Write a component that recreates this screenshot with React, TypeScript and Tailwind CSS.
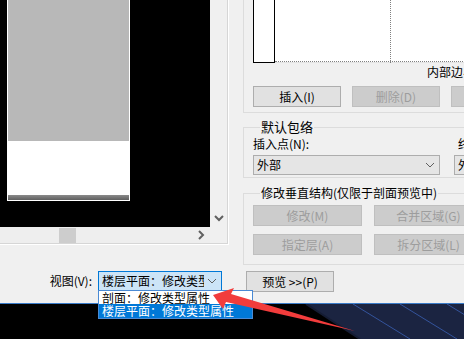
import React from "react";

const Btn = ({ label, w, disabled }: { label: string; w: string; disabled?: boolean }) => (
  <div
    className={`${w} h-[21px] shrink-0 flex items-center justify-center border ${
      disabled ? "bg-[#cccccc] border-[#bfbfbf] text-[#9d9d9d]" : "bg-[#e1e1e1] border-[#adadad] text-black"
    }`}
  >
    {label}
  </div>
);

const Chevron = () => (
  <svg width="10" height="6" viewBox="0 0 10 6">
    <polyline points="1,1 5,5 9,1" fill="none" stroke="#606060" strokeWidth="1" />
  </svg>
);

export default function App() {
  return (
    <div className="relative w-[464px] h-[339px] overflow-hidden bg-black font-['Noto_Sans_CJK_SC',sans-serif] text-[12px] leading-[14px] text-black">
      {/* dialog */}
      <div className="flex h-[304px] bg-[#f0f0f0] border-b border-[#3a7bc8]">
        {/* left column */}
        <div className="w-[243px] shrink-0 flex flex-col">
          <div className="w-[229px] h-[245px] border-r border-b border-white">
            <div className="w-[228px] h-[244px] border-r border-b border-[#d6d6d6] flex flex-col">
              <div className="flex h-[227px]">
                <div className="w-[210px] h-[227px] bg-black pl-[7px]">
                  <div className="w-[123px] h-[201px] border-l border-r border-b border-white flex flex-col">
                    <div className="h-[141px] bg-[#b8b8b8]" />
                    <div className="flex-1 bg-white" />
                    <div className="h-[5px] bg-[linear-gradient(#8a8a8a,#5f5f5f)]" />
                  </div>
                </div>
                <div className="w-[17px] bg-[#f0f0f0] flex flex-col justify-end items-center pb-[5px]">
                  <svg width="10" height="7" viewBox="0 0 10 7">
                    <polyline points="1,1 5,5 9,1" fill="none" stroke="#606060" strokeWidth="2" />
                  </svg>
                </div>
              </div>
              <div className="flex h-[16px]">
                <div className="w-[210px] bg-[#eeeeee] flex items-center relative">
                  <div className="ml-[59px] w-[17px] h-[15px] bg-[#cdcdcd]" />
                  <div className="ml-auto mr-[5px]">
                    <svg width="7" height="10" viewBox="0 0 7 10">
                      <polyline points="1,1 5,5 1,9" fill="none" stroke="#606060" strokeWidth="2" />
                    </svg>
                  </div>
                </div>
                <div className="flex-1 bg-[#f0f0f0]" />
              </div>
            </div>
          </div>
          <div className="flex items-center pt-[26px]">
            <div className="w-[92px] text-right whitespace-nowrap">视图(V):</div>
            <div className="ml-[6px] w-[124px] h-[20px] border border-[#0078d7] bg-[#cce4f7] flex items-center pl-[3px] pr-[4px]">
              <div className="flex-1 overflow-hidden whitespace-nowrap">楼层平面：修改类型属性</div>
              <div className="ml-[3px]">
                <Chevron />
              </div>
            </div>
          </div>
        </div>

        {/* right column */}
        <div className="w-[300px] shrink-0 flex flex-col">
          <div className="h-[113px] border-l border-b border-[#dcdcdc] pl-[9px] flex flex-col">
            <div className="relative h-[63px] bg-white border-b border-[#e4e4e4] flex">
              <div className="w-[22px] h-[63px] border-l border-r border-b border-black" />
              <div className="w-[116px] h-[63px] border-r border-dotted border-[#808080]" />
              <div className="absolute left-[22px] right-0 bottom-0 border-b border-dotted border-[#808080]" />
            </div>
            <div className="pl-[174px] pt-[2px] whitespace-nowrap">内部边界</div>
            <div className="flex gap-[11px] mt-[7px]">
              <Btn label="插入(I)" w="w-[88px]" />
              <Btn label="删除(D)" w="w-[88px]" disabled />
              <Btn label="" w="w-[88px]" disabled />
            </div>
          </div>

          <fieldset className="mt-[7px] h-[58px] border border-[#dcdcdc] pl-[9px]">
            <legend className="ml-[7px] px-[1px] text-[13px] leading-[14px]">默认包络</legend>
            <div className="flex gap-[14px] mt-[3px]">
              <div className="w-[187px] shrink-0 flex flex-col">
                <div className="whitespace-nowrap">插入点(N):</div>
                <div className="mt-[4px] h-[20px] border border-[#adadad] bg-[#e5e5e5] flex items-center pl-[3px] pr-[4px]">
                  <div className="flex-1">外部</div>
                  <Chevron />
                </div>
              </div>
              <div className="w-[80px] shrink-0 flex flex-col">
                <div className="whitespace-nowrap pl-[4px]">终止点(E):</div>
                <div className="mt-[4px] h-[20px] border border-[#adadad] bg-[#e5e5e5] flex items-center pl-[3px]">
                  外部
                </div>
              </div>
            </div>
          </fieldset>

          <fieldset className="mt-[8px] h-[79px] border border-[#dcdcdc] pl-[9px]">
            <legend className="ml-[7px] px-[1px] whitespace-nowrap">修改垂直结构(仅限于剖面预览中)</legend>
            <div className="grid grid-cols-[109px_109px] gap-x-[12px] gap-y-[8px] mt-[5px]">
              <Btn label="修改(M)" w="w-[109px]" disabled />
              <Btn label="合并区域(G)" w="w-[109px]" disabled />
              <Btn label="指定层(A)" w="w-[109px]" disabled />
              <Btn label="拆分区域(L)" w="w-[109px]" disabled />
            </div>
          </fieldset>

          <div className="mt-[6px] ml-[3px]">
            <div className="w-[88px] h-[21px] flex items-center justify-center border border-[#adadad] bg-[#e1e1e1]">
              预览 &gt;&gt;(P)
            </div>
          </div>
        </div>
      </div>

      {/* desktop wallpaper */}
      <div className="h-[35px]">
        <svg width="464" height="35" viewBox="0 304 464 35">
          <rect x="0" y="304" width="464" height="35" fill="#000" />
          <polygon points="306,304 464,304 464,339 360,339" fill="#1b2441" />
          <line x1="306" y1="304" x2="360" y2="339" stroke="#151c33" strokeWidth="2" />
          <line x1="353" y1="304" x2="410" y2="339" stroke="#34549c" strokeWidth="1" />
          <line x1="400" y1="304" x2="457" y2="339" stroke="#34549c" strokeWidth="1" />
          <line x1="447" y1="304" x2="504" y2="339" stroke="#34549c" strokeWidth="1" />
        </svg>
      </div>

      {/* dropdown list */}
      <div className="absolute left-[98px] top-[290px] w-[155px] border border-[#4a8ad4] bg-white">
        <div className="h-[13px] leading-[13px] pl-[3px] whitespace-nowrap overflow-hidden">剖面：修改类型属性</div>
        <div className="h-[14px] leading-[14px] pl-[3px] whitespace-nowrap overflow-hidden bg-[#0078d7] text-white">楼层平面：修改类型属性</div>
      </div>

      {/* red arrow */}
      <svg className="absolute left-0 top-0 pointer-events-none" width="464" height="339" viewBox="0 0 464 339">
        <polygon points="213,295 234,288 231,294 355,331 226,302 223,309" fill="#f23c3c" />
      </svg>
    </div>
  );
}
